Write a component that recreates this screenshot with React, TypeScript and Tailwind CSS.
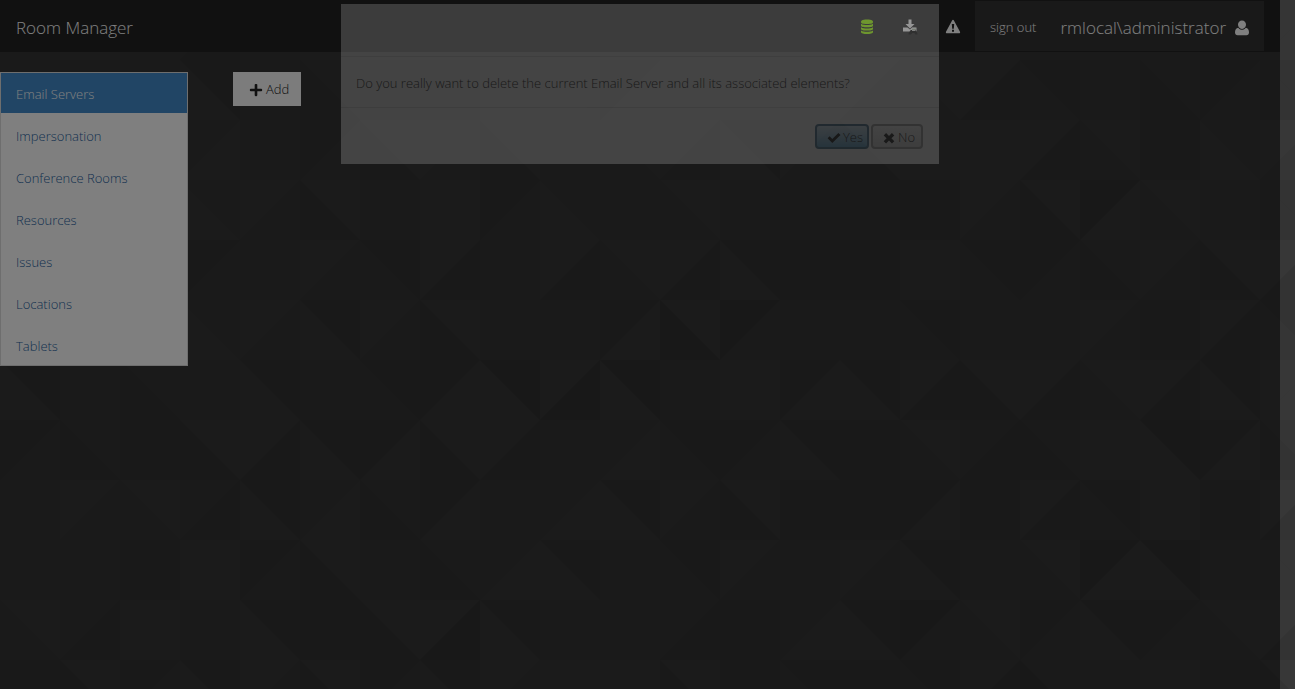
import { FaPlus } from 'react-icons/fa';

const links = ['Email Servers', 'Impersonation', 'Conference Rooms', 'Resources', 'Issues', 'Locations', 'Tablets'];

// Two shade digits per 60px tile: the upper and the lower triangle.
const tiles = [
  '22 33 22 21 22 33 22 22 22 22 33 22 22 33 22 22 33 22 22 22 22 22',
  '22 22 22 13 22 21 11 11 22 23 12 22 33 22 21 32 31 12 22 21 12 11',
  '22 22 22 23 22 12 31 32 31 22 32 21 13 32 31 33 33 31 32 11 23 32',
  '22 22 22 23 32 31 22 33 12 23 22 32 22 22 22 11 32 31 03 32 22 11',
  '22 22 22 12 22 32 12 31 22 31 32 31 13 11 11 33 12 12 21 32 31 31',
  '22 22 22 23 32 13 32 31 22 22 13 30 02 22 22 12 22 22 32 11 31 12',
  '13 22 21 22 13 22 12 13 03 30 03 22 33 13 13 31 31 31 32 31 13 33',
  '12 21 11 31 31 13 13 31 31 22 23 12 12 13 11 32 21 21 33 03 13 21',
  '22 32 32 21 13 23 21 13 22 23 13 32 31 11 11 13 11 31 12 33 11 31',
  '22 22 11 33 12 31 22 21 23 13 22 12 32 22 32 13 22 32 03 03 22 22',
  '32 21 33 22 13 11 31 30 13 22 22 21 11 23 13 02 32 12 13 12 32 31',
  '11 31 12 13 32 31 12 13 32 33 33 31 11 12 11 12 31 20 22 33 11 31',
];
const shades = ['#313131', '#333333', '#353535', '#373737'];

function Backdrop() {
  return (
    <svg className="pointer-events-none absolute inset-0 h-full w-full" aria-hidden="true">
      {tiles.map((row, r) =>
        row.split(' ').map((t, c) => {
          const x = c * 60;
          const y = r * 60;
          const rising = (r + c) % 2 === 1;
          const lower = rising
            ? `${x + 60},${y} ${x + 60},${y + 60} ${x},${y + 60}`
            : `${x},${y} ${x + 60},${y + 60} ${x},${y + 60}`;
          return (
            <g key={`${r}-${c}`}>
              <rect x={x} y={y} width="60" height="60" fill={shades[Number(t[0])]} />
              <polygon points={lower} fill={shades[Number(t[1])]} />
            </g>
          );
        }),
      )}
    </svg>
  );
}

function DatabaseIcon() {
  return (
    <svg className="h-4 w-4" viewBox="0 0 16 16" aria-hidden="true" fill="currentColor">
      <path d="M2 3c0-1.200 1-2.500 6-2.500S14 1.800 14 3 13 5 8 5 2 4.200 2 3z" />
      <path d="M2 4.800C3.500 6 6 6 8 6s4.500 0 6-1.200V6.500C14 8 11 8.300 8 8.300S2 8 2 6.500z" />
      <path d="M2 8.200c1.500 1.100 4 1.200 6 1.200s4.500-.1 6-1.200v1.500c0 1.500-3 1.900-6 1.900s-6-.4-6-1.900z" />
      <path d="M2 11.500c1.500 1.100 4 1.200 6 1.200s4.500-.1 6-1.200V13c0 1.500-3 2-6 2s-6-.5-6-2z" />
    </svg>
  );
}

function DownloadIcon() {
  return (
    <svg className="h-4 w-4" viewBox="0 0 16 16" aria-hidden="true">
      <path fill="#fff" d="M6.500 0.500h3v4.500h3L8 9.500 3.500 5h3zM1 8.500h4.500L8 10.500l2-2h4.500v4H1z" />
      <path fill="#050505" d="M6.500 15.500c0-2.500 1.500-3 2.200-4.500h5c.7 1.500 1.800 2 1.800 4.500h-2l-1.200-1.500h-2L9 15.500z" />
      <path fill="#fff" d="M10 8.800h3.500v3H10z" />
      <path fill="#446622" d="M10.500 9.800h1v1h-1zm2 0h1v1h-1z" />
    </svg>
  );
}

function WarningIcon() {
  return (
    <svg className="h-4 w-4" viewBox="0 0 16 16" aria-hidden="true">
      <path fill="#fff" fillRule="evenodd" d="M8 .8c.4 0 .7.200.9.600l6.100 11.400c.400.800 0 1.500-.9 1.500H1.900c-.9 0-1.300-.7-.9-1.500L7.100 1.400c.2-.4.500-.6.900-.6zM6.800 5l.4 4.800h1.600L9.200 5zM7 10.800h2v1.900H7z" />
    </svg>
  );
}

function UserIcon() {
  return (
    <svg className="h-4 w-4" viewBox="0 0 16 16" aria-hidden="true" fill="#fff">
      <path d="M8 .5c2.300 0 4 1.700 4 4S10.300 9 8 9 4 6.800 4 4.500s1.700-4 4-4z" />
      <path d="M4.300 7.700C5.300 9 6.500 9.800 8 9.800s2.700-.8 3.700-2.100C14 8 15 10 15 12.600c0 1.700-1 2.600-2.600 2.600H3.600C2 15.200 1 14.300 1 12.600 1 10 2 8 4.300 7.700z" />
    </svg>
  );
}

function CheckIcon() {
  return (
    <svg className="h-3.5 w-3.5" viewBox="0 0 14 14" aria-hidden="true" fill="currentColor">
      <path d="M.6 7.300 2.600 5.200 5.300 7.900 11.400 1.900 13.500 4 5.300 12z" />
    </svg>
  );
}

function CrossIcon() {
  return (
    <svg className="h-3.5 w-3.5" viewBox="0 0 14 14" aria-hidden="true" fill="currentColor">
      <path d="M4.100 2 7 4.900 9.900 2 12.300 4.400 9.400 7.300 12.300 10.200 9.900 12.500 7 9.600 4.100 12.500 1.700 10.200 4.600 7.300 1.700 4.400z" />
    </svg>
  );
}

export default function App() {
  return (
    <div className="relative min-h-screen overflow-hidden bg-[#353535] font-['Open_Sans','Noto_Sans',sans-serif] text-[13px] font-light">
      <Backdrop />
      <div className="relative mr-[15px] min-h-screen">
        <header className="flex h-13 items-center bg-[#222] px-4 text-white">
          <a href="#home" className="pt-1 text-[17px]">Room Manager</a>
          <nav className="ml-auto flex h-full items-center">
            <button aria-label="Database" className="mr-[27px] pt-0.5 text-[#9cff00]"><DatabaseIcon /></button>
            <button aria-label="Downloads" className="mr-[27px] pt-0.5"><DownloadIcon /></button>
            <button aria-label="Warnings" className="mr-3.5 pt-0.5"><WarningIcon /></button>
            <div className="flex h-full items-center border-y border-[#222] bg-[#333] pr-3.5 pl-[15px] pt-1">
              <a href="#signout" className="mr-6">sign out</a>
              <a href="#account" className="flex items-center gap-2 text-[17px]">
                rmlocal\administrator <UserIcon />
              </a>
            </div>
          </nav>
        </header>
        <div className="flex items-start pt-5">
          <nav className="w-47 border border-[#ddd] bg-white">
            {links.map((label, i) => (
              <a
                key={label}
                href={`#${label.toLowerCase().replace(' ', '-')}`}
                className={i === 0
                  ? 'flex h-10 items-center bg-[#428bca] px-[15px] pt-1 text-white'
                  : 'flex h-[42px] items-center px-[15px] pt-1.5 text-[#1f5fa0]'}
              >
                {label}
              </a>
            ))}
          </nav>
          <button className="ml-[45px] flex h-[34px] items-center gap-[3px] bg-[#f8f8f8] pr-3 pl-4 pt-0.5 text-[#222]">
            <FaPlus className="h-3.5 w-3.5" /> Add
          </button>
        </div>
        <div className="absolute inset-0 bg-black/50" />
        <div
          role="dialog"
          aria-label="Confirm deletion"
          className="absolute inset-x-0 top-1 mx-auto w-[598px] bg-white text-[#111] opacity-[0.18]"
        >
          <div className="h-[53px] border-b border-[#e2e2e2]" />
          <p className="flex h-[51px] items-center border-b border-[#e2e2e2] px-[15px] pt-1">
            Do you really want to delete the current Email Server and all its associated elements?
          </p>
          <div className="flex justify-end gap-0.5 px-4 pt-4 pb-[15px] text-[13px]">
            <button className="flex h-[25px] w-[54px] items-center justify-end gap-0.5 rounded-sm border-2 border-[#3f6c88] bg-linear-to-b from-[#cfe4f2] to-[#62aad4] pt-0.5 pr-1">
              <CheckIcon /> Yes
            </button>
            <button className="flex h-[25px] w-[52px] items-center justify-end gap-0.5 rounded-sm border-2 border-[#999] bg-linear-to-b from-[#f8f8f8] to-[#d8d8d8] pt-0.5 pr-1.5">
              <CrossIcon /> No
            </button>
          </div>
        </div>
      </div>
    </div>
  );
}
